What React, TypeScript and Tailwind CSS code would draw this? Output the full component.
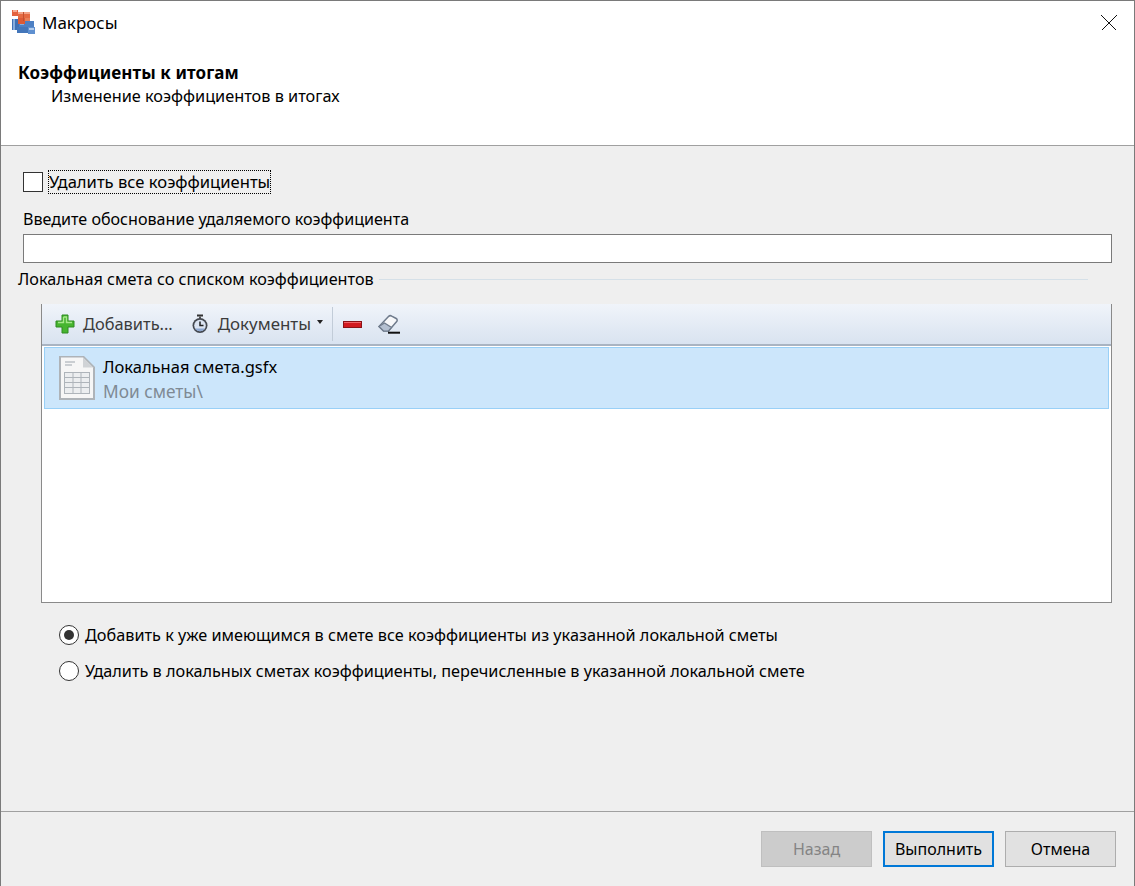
import type { ReactNode } from "react";

function MacroLogo() {
  return (
    <svg width="25" height="25" viewBox="0 0 25 25" className="shrink-0 mb-[3px]">
      <rect x="1" y="10" width="8" height="11" fill="#3f70b4" />
      <rect x="2" y="10" width="2" height="11" fill="#86acdd" />
      <rect x="8" y="12" width="15" height="8" fill="#4d80c4" />
      <rect x="6" y="18" width="12" height="6" fill="#4376ba" />
      <rect x="17" y="18" width="7" height="7" fill="#5f90d0" />
      <rect x="18" y="19" width="5" height="2" fill="#b4cdec" />
      <rect x="9" y="13" width="4" height="3" fill="#88addd" />
      <rect x="1" y="1" width="6" height="6" fill="#e4633f" />
      <rect x="2" y="1" width="4" height="2" fill="#f5ab93" />
      <rect x="7" y="3" width="12" height="6" fill="#e56a42" />
      <rect x="7" y="3" width="12" height="2" fill="#f2a488" />
      <rect x="7" y="9" width="7" height="6" fill="#dc5a36" />
      <rect x="12" y="3" width="1" height="9" fill="#c2502f" />
      <rect x="14" y="9" width="5" height="3" fill="#e98058" />
    </svg>
  );
}

function CloseIcon() {
  return (
    <svg width="16" height="16" viewBox="0 0 16 16" shapeRendering="crispEdges">
      <path d="M0.5 0.5 15.5 15.5 M15.5 0.5 0.5 15.5" stroke="#111" strokeWidth="1" fill="none" />
    </svg>
  );
}

function PlusIcon() {
  return (
    <svg width="20" height="20" viewBox="0 0 20 20">
      <path d="M7 1h6v6h6v6h-6v6H7v-6H1V7h6z" fill="#46b52f" stroke="#2f8a22" strokeWidth="1" />
      <path d="M8.500 3h3v5.500H17M8.500 3v5.500H3" fill="none" stroke="#a6e88a" strokeWidth="1.400" />
    </svg>
  );
}

function TimerIcon() {
  return (
    <svg width="18" height="20" viewBox="0 0 18 20">
      <rect x="6" y="0.500" width="6" height="2" fill="#333" />
      <rect x="8" y="2.500" width="2" height="2.500" fill="#555" />
      <circle cx="9" cy="11.500" r="7.500" fill="#44484f" />
      <circle cx="9" cy="11.500" r="5.800" fill="#dbe4f2" />
      <path d="M4 14.500a5.800 5.800 0 0 0 10 0z" fill="#8ea7cf" />
      <path d="M9 7.500v4h3.500" fill="none" stroke="#222" strokeWidth="1.500" />
    </svg>
  );
}

function MinusIcon() {
  return (
    <svg width="19" height="7" viewBox="0 0 19 7" shapeRendering="crispEdges">
      <rect x="0.500" y="0.500" width="18" height="6" fill="#d21a1f" stroke="#8a1216" />
      <rect x="1" y="1" width="17" height="1" fill="#f0656a" />
    </svg>
  );
}

function EraserIcon() {
  return (
    <svg width="22" height="20" viewBox="0 0 22 20">
      <path d="M1 12.500 10.500 2.500a2.500 2.500 0 0 1 3.200-.4l4.500 2.400a2 2 0 0 1 .5 3L10.500 17H5.500z" fill="#f7f8fa" stroke="#6f7b8c" strokeWidth="1.500" />
      <path d="M1 12.500 5.500 17h5l3-3.500-7-4.500z" fill="#b4c0d1" stroke="#6f7b8c" strokeWidth="1.200" />
      <rect x="10" y="17.700" width="12" height="2" fill="#111" />
    </svg>
  );
}

function SheetIcon() {
  return (
    <svg width="38" height="46" viewBox="0 0 38 46">
      <path d="M1 1h25l11 11v33H1z" fill="#aeb3b8" />
      <path d="M3 2.500h22l10 10V43H3z" fill="#f6f6f6" />
      <path d="M25 2.500v10h10z" fill="#d0d3d6" />
      <path d="M7 7h10M7 10h7" stroke="#bcc1c6" strokeWidth="1.500" />
      <rect x="6.500" y="17.500" width="25" height="21" fill="#eceef0" stroke="#aeb4ba" />
      <path d="M6.500 22.500h25M6.500 27.500h25M6.500 32.500h25M15 17.500v21M23 17.500v21" stroke="#aeb4ba" strokeWidth="1" />
    </svg>
  );
}

function ToolButton({ icon, label, size }: { icon: ReactNode; label: string; size: string }) {
  return (
    <div className="flex items-center gap-[9px] text-[#3b3b3b]">
      {icon}
      <span className={size}>{label}</span>
    </div>
  );
}

function Radio({ checked, label }: { checked?: boolean; label: string }) {
  return (
    <div className="flex items-center gap-[6px] h-[20px]">
      <span className="w-[20px] h-[20px] rounded-full border border-[#333] bg-white flex items-center justify-center shrink-0">
        {checked && <span className="w-[10px] h-[10px] rounded-full bg-[#333]" />}
      </span>
      <span className="whitespace-nowrap text-[16.25px]">{label}</span>
    </div>
  );
}

function FooterButton({ label, kind }: { label: string; kind?: "disabled" | "focus" }) {
  const cls =
    kind === "disabled"
      ? "bg-[#cccccc] border border-[#bfbfbf] text-[#848484]"
      : kind === "focus"
        ? "bg-[#e1e1e1] border-2 border-[#0078d7] text-black"
        : "bg-[#e1e1e1] border border-[#adadad] text-black";
  return <div className={`w-[111px] h-[36px] flex items-center justify-center ${cls}`}>{label}</div>;
}

export default function App() {
  return (
    <div className="w-[1135px] h-[886px] flex flex-col overflow-hidden bg-[#efefef] border-x border-[#7a7a7a] text-[16px] text-black [font-family:'Noto_Sans',sans-serif] leading-[20px]">
      {/* Title and wizard header */}
      <div className="h-[146px] shrink-0 bg-white border-y border-t-[#7a7a7a] border-b-[#a0a0a0] flex flex-col">
        <div className="h-[44px] flex items-center pl-[10px] pr-[17px] shrink-0">
          <MacroLogo />
          <span className="ml-[6px] flex-1 text-[17px]">Макросы</span>
          <CloseIcon />
        </div>
        <div className="pl-[17px] pt-[18px] font-bold text-[17px] tracking-[0.1px]">Коэффициенты к итогам</div>
        <div className="pl-[50px] pt-[3px] text-[16.3px]">Изменение коэффициентов в итогах</div>
      </div>

      {/* Main content */}
      <div className="flex-1 flex flex-col pt-[25px] pl-[22px] pr-[22px]">
        <div className="flex items-center gap-[6px] h-[22px]">
          <span className="w-[20px] h-[20px] bg-white border border-[#333] shrink-0" />
          <span className="outline-1 outline-dotted outline-black text-[16.6px] leading-[22px]">Удалить все коэффициенты</span>
        </div>
        <div className="mt-[16px] text-[16.1px]">Введите обоснование удаляемого коэффициента</div>
        <div className="mt-[5px] h-[29px] bg-white border border-[#7a7a7a]" />

        <div className="mt-[6px] ml-[-5px] mr-[24px] flex items-center gap-[5px]">
          <span className="whitespace-nowrap text-[16.2px]">Локальная смета со списком коэффициентов</span>
          <span className="flex-1 h-px bg-[#d5e0e8]" />
        </div>

        <div className="mt-[15px] ml-[18px] h-[299px] border border-t-0 border-[#8a8a8a] bg-white flex flex-col">
          <div className="h-[42px] shrink-0 flex items-center pl-[13px] bg-gradient-to-b from-[#f0f4fa] to-[#d9e3f0] border-b-2 border-[#a9b4c2]">
            <ToolButton icon={<PlusIcon />} label="Добавить..." size="text-[16.4px] ml-[-1px]" />
            <span className="ml-[18px]">
              <ToolButton icon={<TimerIcon />} label="Документы" size="text-[16.9px]" />
            </span>
            <span className="ml-[6px] mb-[4px] w-0 h-0 border-x-[3.500px] border-x-transparent border-t-[4px] border-t-[#222]" />
            <span className="ml-[9px] w-px h-[34px] bg-[#c2ccd8]" />
            <span className="ml-[10px] flex"><MinusIcon /></span>
            <span className="ml-[16px] flex"><EraserIcon /></span>
          </div>
          <div className="mt-[1px] mx-[2px] h-[62px] bg-[#cce6fb] border border-[#99d0f7] flex items-center pl-[13px] gap-[7px]">
            <SheetIcon />
            <div className="flex flex-col gap-[5px] pt-[2px]">
              <span className="text-[16.5px]">Локальная смета.gsfx</span>
              <span className="text-[#7f8a94] text-[17.300px]">Мои сметы\</span>
            </div>
          </div>
        </div>

        <div className="mt-[22px] ml-[36px] flex flex-col gap-[16px]">
          <Radio checked label="Добавить к уже имеющимся в смете все коэффициенты из указанной локальной сметы" />
          <Radio label="Удалить в локальных сметах коэффициенты, перечисленные в указанной локальной смете" />
        </div>
      </div>

      {/* Footer buttons */}
      <div className="h-[75px] shrink-0 border-t border-[#a0a0a0] flex items-start justify-end gap-[11px] pt-[19px] pr-[18px]">
        <FooterButton label="Назад" kind="disabled" />
        <FooterButton label="Выполнить" kind="focus" />
        <FooterButton label="Отмена" />
      </div>
    </div>
  );
}
